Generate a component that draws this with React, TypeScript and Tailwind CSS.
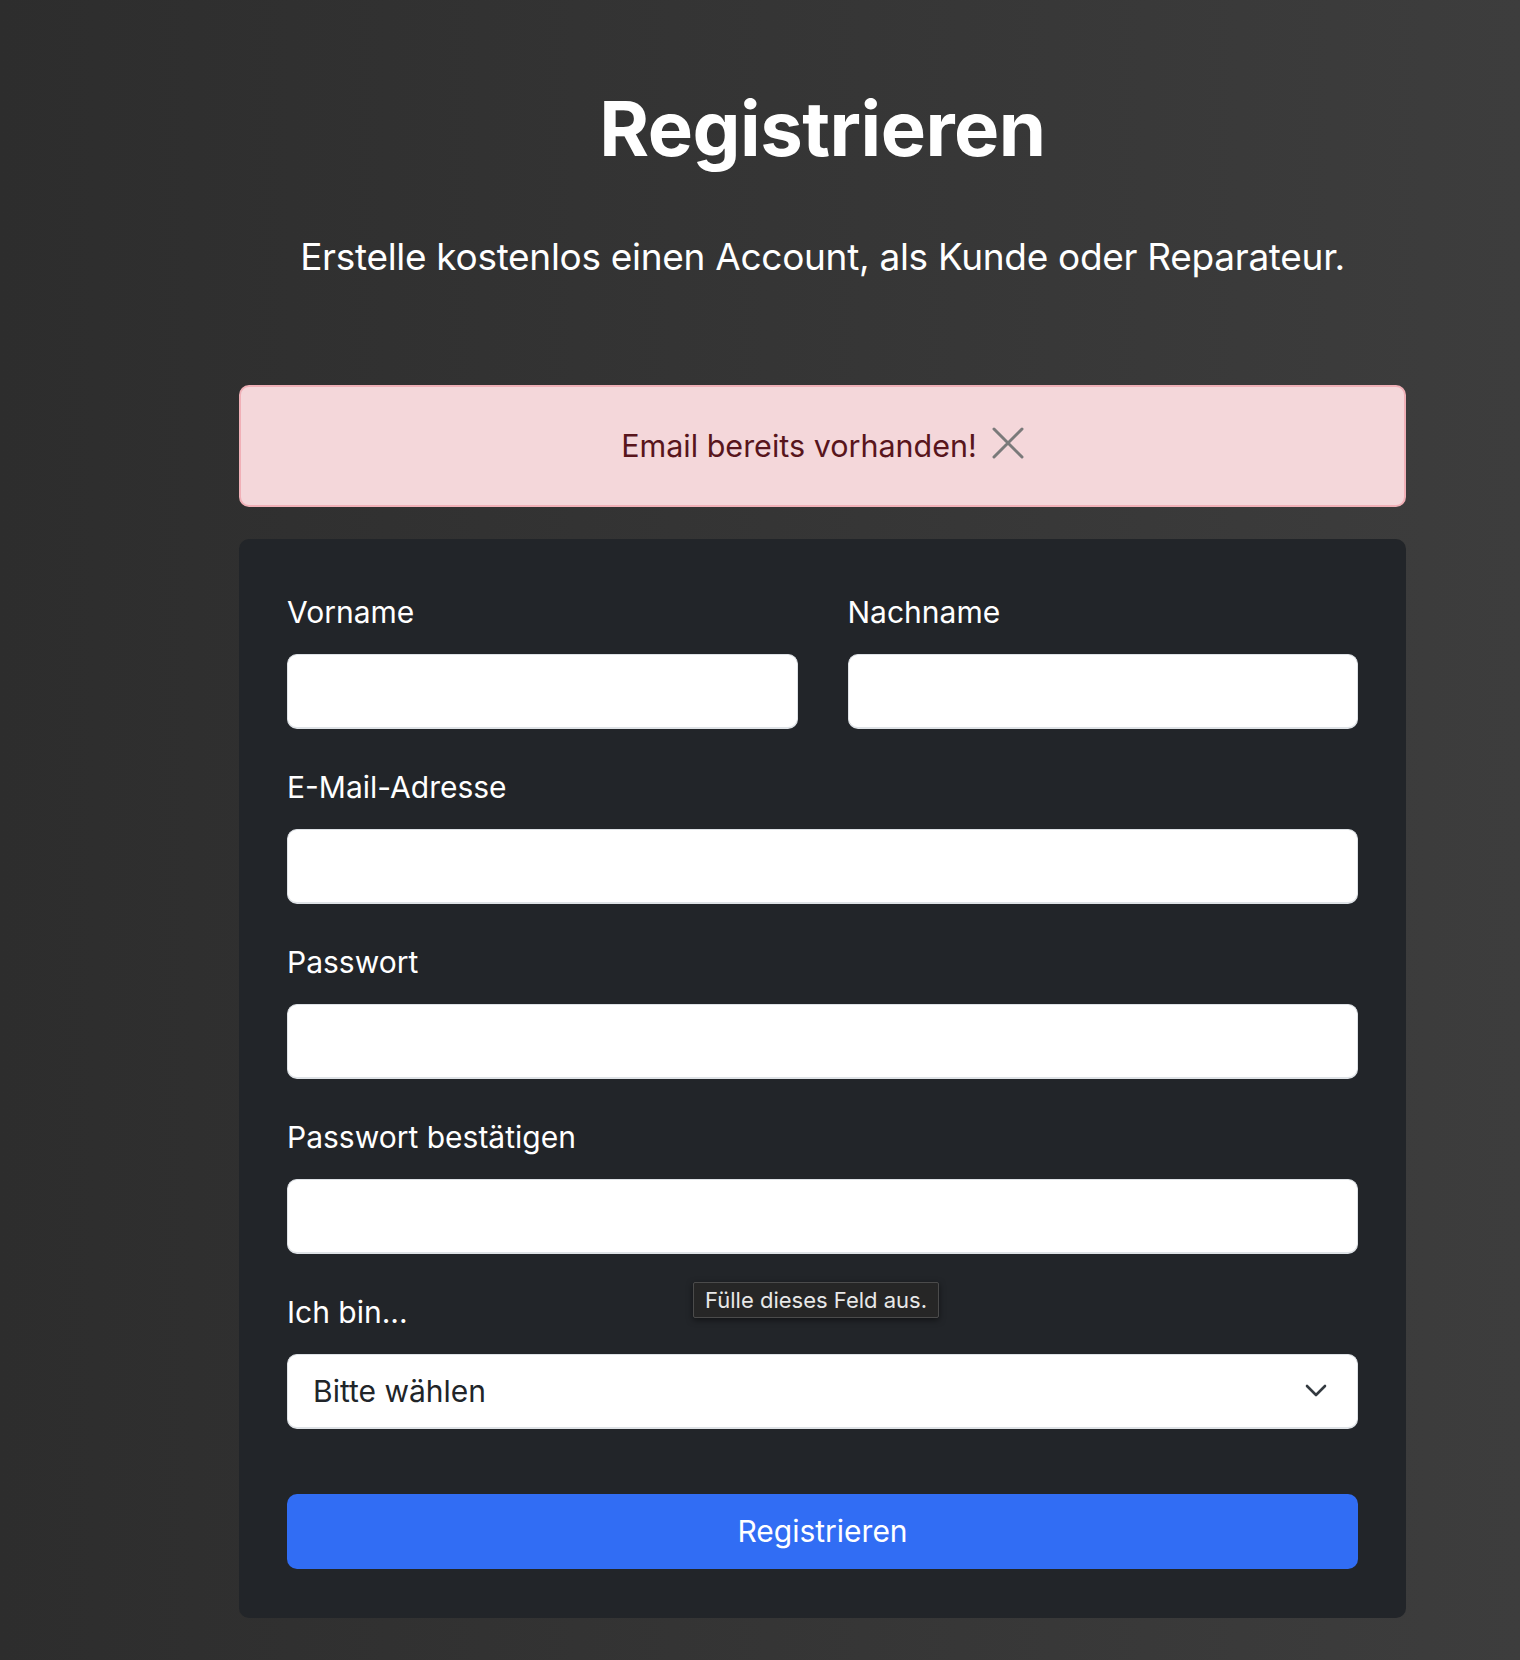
import React from 'react'

const font = { fontFamily: 'Inter, "Noto Sans", sans-serif' }

function Field({ label, type = 'text' }: { label: string; type?: string }) {
  return (
    <div className="flex flex-col">
      <label className="text-[30px] leading-[44px] text-white mb-[20px]">{label}</label>
      <input
        type={type}
        className="h-[75px] w-full rounded-[10px] border border-b-2 border-[#dee2e6] bg-white px-6 text-[30px] text-[#212529] outline-none"
      />
    </div>
  )
}

export default function App() {
  return (
    <div
      className="min-h-[1660px] w-full bg-linear-to-r from-[#2d2d2d] to-[#3d3d3d]"
      style={font}
    >
      <div className="ml-[239px] w-[1167px] pt-[83px]">
        {/* Header */}
        <h1 className="text-center text-[76px] leading-[91px] font-bold tracking-[-0.5px] text-white">
          Registrieren
        </h1>
        <p className="mt-[55px] text-center text-[37px] leading-[56px] text-white tracking-[-0.3px]">
          Erstelle kostenlos einen Account, als Kunde oder Reparateur.
        </p>

        {/* Alert */}
        <div className="mt-[100px] flex h-[122px] items-center justify-center gap-[15px] rounded-[10px] border-2 border-[#f0b0b7] bg-[#f4d7da]">
          <span className="text-[30.5px] leading-[46px] text-[#58151c]">Email bereits vorhanden!</span>
          <svg width="32" height="32" viewBox="0 0 32 32" className="-mt-[6px]">
            <path d="M2 2 L30 30 M30 2 L2 30" stroke="#7a7a7a" strokeWidth="3" strokeLinecap="round" />
          </svg>
        </div>

        {/* Form card */}
        <form className="relative mt-[32px] flex flex-col gap-[36px] rounded-[10px] bg-[#222529] px-[48px] pt-[51px] pb-[49px]">
          <div className="grid grid-cols-2 gap-[50px]">
            <Field label="Vorname" />
            <Field label="Nachname" />
          </div>
          <Field label="E-Mail-Adresse" type="email" />
          <Field label="Passwort" type="password" />
          <Field label="Passwort bestätigen" type="password" />

          <div className="flex flex-col">
            <label className="text-[30px] leading-[44px] text-white mb-[20px]">Ich bin...</label>
            <div className="flex h-[75px] w-full items-center justify-between rounded-[10px] border border-b-2 border-[#dee2e6] bg-white pl-[25px] pr-[30px]">
              <span className="text-[30px] text-[#212529]">Bitte wählen</span>
              <svg width="22" height="14" viewBox="0 0 22 14">
                <path d="M2 2 L11 11 L20 2" fill="none" stroke="#343a40" strokeWidth="2.6" strokeLinecap="round" strokeLinejoin="round" />
              </svg>
            </div>
          </div>

          <button
            type="button"
            className="mt-[29px] h-[75px] w-full rounded-[10px] bg-[#316df4] text-[30px] text-white"
          >
            Registrieren
          </button>

          {/* Native validation tooltip */}
          <div className="absolute left-[454px] top-[743px] rounded-[2px] border border-[#4b4b4b] bg-[#262626] px-[11px] py-[3px] text-[22px] leading-[28px] text-[#e8e8e8] shadow-[0_2px_6px_rgba(0,0,0,0.5)]">
            Fülle dieses Feld aus.
          </div>
        </form>
      </div>
    </div>
  )
}
